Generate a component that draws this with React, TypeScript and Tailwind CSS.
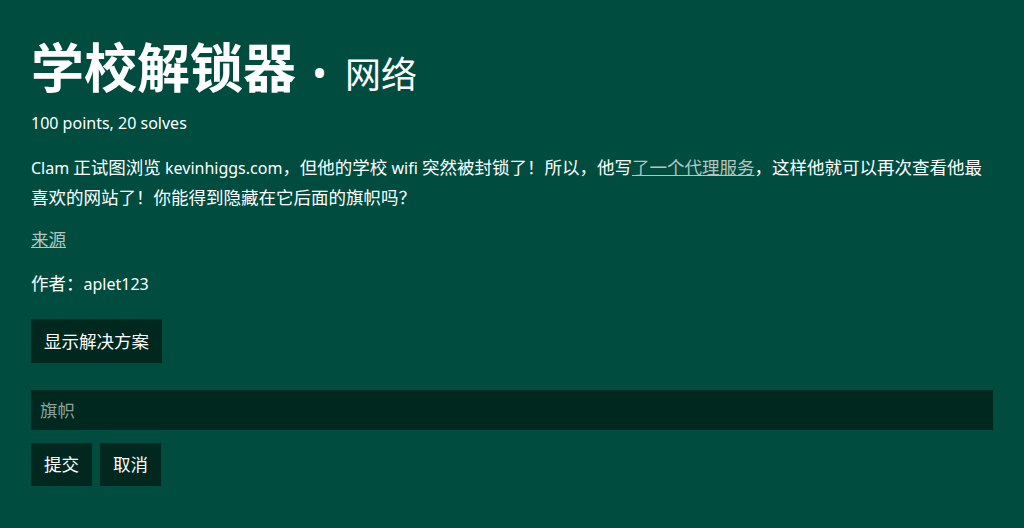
import React from "react";

function C({ children }: { children: React.ReactNode }) {
  return <span className="text-[17.5px]">{children}</span>;
}

export default function App() {
  const font = { fontFamily: '"Noto Sans", "Noto Sans CJK SC", sans-serif' };
  return (
    <div className="min-h-[528px] w-full bg-[#004d40] text-white px-[31px] pt-[28px]" style={font}>
      <h1 className="flex items-baseline leading-[80px]">
        <span className="text-[53px] font-bold">学校解锁器</span>
        <span className="text-[40px] ml-[16px] mr-[18px]">•</span>
        <span className="text-[36px]">网络</span>
      </h1>
      <p className="text-[16px] leading-[24px] mt-[-4px]">100 points, 20 solves</p>
      <p className="text-[16px] leading-[29px] mt-[18px]">
        Clam <C>正试图浏览</C> kevinhiggs.com<C>，但他的学校</C> wifi <C>突然被封锁了！所以，他写</C>
        <a className="underline text-[#b5c4bf]"><C>了一个代理服务</C></a>
        <C>，这样他就可以再次查看他最喜欢的网站了！你能得到隐藏在它后面的旗帜吗？</C>
      </p>
      <p className="text-[16px] leading-[24px] mt-[14px]">
        <a className="underline text-[#b5c4bf]"><C>来源</C></a>
      </p>
      <p className="text-[16px] leading-[24px] mt-[19px]"><C>作者：</C>aplet123</p>
      <button className="mt-[23px] block bg-[#00281f] px-[13px] h-[44px] text-[17.5px] text-white">显示解决方案</button>
      <div className="mt-[27px] h-[40px] w-full bg-[#00281f] flex items-center px-[9px] text-[17.5px] text-[#8aa39c]">旗帜</div>
      <div className="mt-[13px] flex gap-[8px]">
        <button className="bg-[#00281f] px-[13px] h-[43px] text-[17.5px] text-white">提交</button>
        <button className="bg-[#00281f] px-[13px] h-[43px] text-[17.5px] text-white">取消</button>
      </div>
    </div>
  );
}
